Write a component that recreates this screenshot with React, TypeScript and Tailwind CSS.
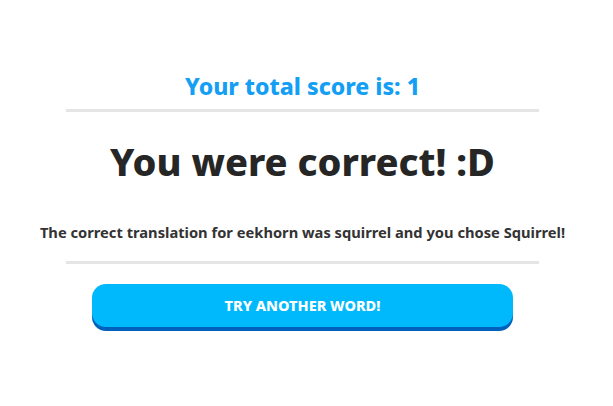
import React from 'react';

const font = { fontFamily: '"Noto Sans", "Open Sans", sans-serif' };

const Divider: React.FC<{ className?: string }> = ({ className = '' }) => (
  <div className={`h-[3px] w-full bg-[#e5e5e5] ${className}`} />
);

const App: React.FC = () => {
  const score = 1;
  const word = 'eekhorn';
  const answer = 'squirrel';
  const chosen = 'Squirrel';

  return (
    <div className="min-h-screen bg-white pl-[66px] pr-[74px] pt-[71px]" style={font}>
      <div className="flex flex-col items-center">
        <h2 className="text-[23px] leading-[30px] font-extrabold text-[#149ff5]">
          Your total score is: {score}
        </h2>
        <Divider className="mt-[8px]" />

        <h1 className="mt-[25px] text-[38px] leading-[48px] font-extrabold text-[#262626]">
          You were correct! :D
        </h1>

        <p className="mt-[37px] whitespace-nowrap text-[14.7px] leading-[20px] font-bold text-[#333333]">
          The correct translation for {word} was {answer} and you chose {chosen}!
        </p>
        <Divider className="mt-[19px]" />

        <button className="mt-[20px] h-[43px] w-[421px] rounded-[14px] bg-[#00b9fd] text-[14.5px] font-extrabold text-white shadow-[0_4px_0_#0061bd]">
          TRY ANOTHER WORD!
        </button>
      </div>
    </div>
  );
};

export default App;
